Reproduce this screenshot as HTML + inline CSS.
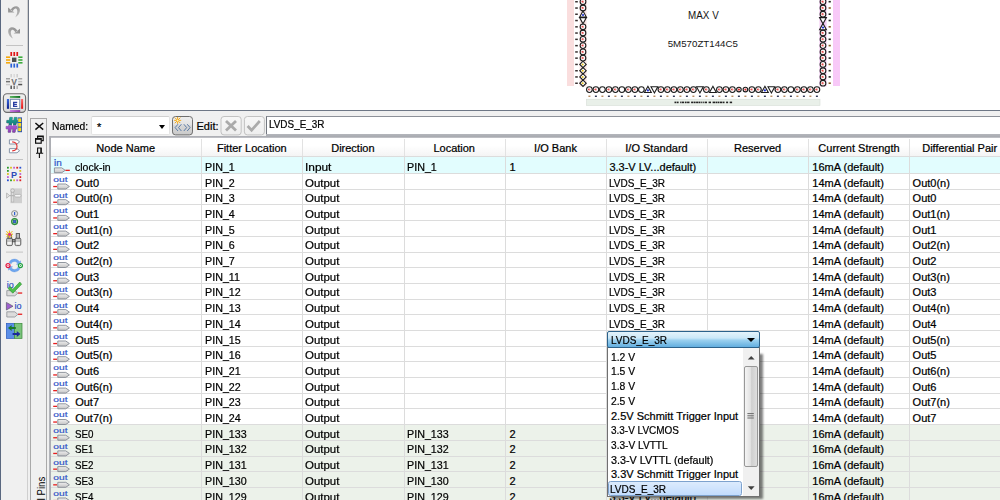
<!DOCTYPE html>
<html><head><meta charset="utf-8"><title>Pin Planner</title>
<style>
html,body{margin:0;padding:0}
body{width:1000px;height:500px;overflow:hidden;position:relative;background:#f0f0f0;font-family:"Liberation Sans",sans-serif;font-size:11px;color:#000}
.abs{position:absolute}
.t{position:absolute;white-space:pre;line-height:13px;height:13px;-webkit-text-stroke:.22px #000}
.row{position:absolute;left:51px;width:949px}
.hl{position:absolute;left:51px;width:949px;height:1px;background:#dcdcdc}
.vl{position:absolute;width:1px;background:#dcdcdc;top:157px;height:343px}
.cap{display:inline-block;transform-origin:0 50%;transform:scaleX(.91)}
svg{position:absolute;overflow:visible}
</style></head><body>

<div class="abs" id="chiparea" style="left:29px;top:0;width:971px;height:110px;background:#fff"></div>
<div class="abs" style="left:0;top:0;width:1px;height:500px;background:#5a6880"></div>
<div class="abs" style="left:27px;top:0;width:1px;height:500px;background:#cfcfcf"></div>
<div class="abs" style="left:28px;top:0;width:1px;height:111px;background:#6e7786"></div>
<div class="abs" style="left:28px;top:110px;width:972px;height:1px;background:#6e7786"></div>
<svg id="chip" style="left:0;top:0" width="1000" height="112" viewBox="0 0 1000 112">
<rect x="567" y="0" width="7" height="86" fill="#fadede"/>
<rect x="833" y="0" width="7" height="86" fill="#f8c9f8"/>
<rect x="579.6" y="0" width="7" height="86.5" fill="#f8e2e2"/>
<rect x="819.4" y="0" width="7.2" height="86.5" fill="#f3cdf3"/>
<path d="M579.8 83.2L583.0 80.0L586.2 83.2L583.0 86.4Z" fill="#fff" stroke="#1c1c1c" stroke-width="1.1"/><circle cx="582.7" cy="83.2" r="1.0" fill="#e8c020"/>
<rect x="575.2" y="82.5" width="2.6" height="1.5" fill="#3a3030"/>
<path d="M579.8 76.9L583.0 73.7L586.2 76.9L583.0 80.1Z" fill="#fff" stroke="#1c1c1c" stroke-width="1.1"/><circle cx="582.7" cy="76.9" r="1.0" fill="#e8c020"/>
<rect x="575.2" y="76.2" width="2.6" height="1.5" fill="#3a3030"/>
<path d="M579.8 70.7L583.0 67.5L586.2 70.7L583.0 73.9Z" fill="#fff" stroke="#1c1c1c" stroke-width="1.1"/><circle cx="582.7" cy="70.7" r="1.0" fill="#e8c020"/>
<rect x="575.2" y="70.0" width="2.6" height="1.5" fill="#3a3030"/>
<path d="M579.8 64.4L583.0 61.2L586.2 64.4L583.0 67.6Z" fill="#fff" stroke="#1c1c1c" stroke-width="1.1"/><circle cx="582.7" cy="64.4" r="1.0" fill="#e8c020"/>
<rect x="575.2" y="63.7" width="2.6" height="1.5" fill="#3a3030"/>
<circle cx="583.0" cy="58.1" r="2.85" fill="#fff" stroke="#1c1c1c" stroke-width="1.1"/><circle cx="582.8" cy="58.1" r="1.25" fill="#f29a9a"/><circle cx="582.3" cy="57.9" r="0.7" fill="#e04040"/>
<rect x="575.2" y="57.4" width="2.6" height="1.5" fill="#3a3030"/>
<circle cx="583.0" cy="51.9" r="2.85" fill="#fff" stroke="#1c1c1c" stroke-width="1.1"/><circle cx="582.8" cy="51.9" r="1.25" fill="#f29a9a"/><circle cx="582.3" cy="51.7" r="0.7" fill="#e04040"/>
<rect x="575.2" y="51.2" width="2.6" height="1.5" fill="#3a3030"/>
<circle cx="583.0" cy="45.6" r="2.85" fill="#fff" stroke="#1c1c1c" stroke-width="1.1"/><circle cx="582.8" cy="45.6" r="1.25" fill="#f29a9a"/><circle cx="582.3" cy="45.4" r="0.7" fill="#e04040"/>
<rect x="575.2" y="44.9" width="2.6" height="1.5" fill="#3a3030"/>
<circle cx="583.0" cy="39.3" r="2.85" fill="#fff" stroke="#1c1c1c" stroke-width="1.1"/><circle cx="582.8" cy="39.3" r="1.25" fill="#f29a9a"/><circle cx="582.3" cy="39.1" r="0.7" fill="#e04040"/>
<rect x="575.2" y="38.6" width="2.6" height="1.5" fill="#3a3030"/>
<circle cx="583.0" cy="33.0" r="2.85" fill="#fff" stroke="#1c1c1c" stroke-width="1.1"/><circle cx="582.8" cy="33.0" r="1.25" fill="#f29a9a"/><circle cx="582.3" cy="32.8" r="0.7" fill="#e04040"/>
<rect x="575.2" y="32.3" width="2.6" height="1.5" fill="#3a3030"/>
<circle cx="583.0" cy="26.8" r="2.85" fill="#fff" stroke="#1c1c1c" stroke-width="1.1"/><circle cx="582.8" cy="26.8" r="1.25" fill="#f29a9a"/><circle cx="582.3" cy="26.6" r="0.7" fill="#e04040"/>
<rect x="575.2" y="26.1" width="2.6" height="1.5" fill="#3a3030"/>
<path d="M583.0 23.8L586.4 17.6L579.6 17.6Z" fill="#fff" stroke="#1c1c1c" stroke-width="1.1"/>
<rect x="575.2" y="19.8" width="2.6" height="1.5" fill="#3a3030"/>
<path d="M583.0 10.9L586.4 17.1L579.6 17.1Z" fill="#fff" stroke="#1c1c1c" stroke-width="1.1"/><circle cx="583.0" cy="15.0" r="1.1" fill="#2030d0"/>
<rect x="575.2" y="13.5" width="2.6" height="1.5" fill="#3a3030"/>
<circle cx="583.0" cy="8.0" r="2.85" fill="#fff" stroke="#1c1c1c" stroke-width="1.1"/><circle cx="582.8" cy="8.0" r="1.25" fill="#f29a9a"/><circle cx="582.3" cy="7.8" r="0.7" fill="#e04040"/>
<rect x="575.2" y="7.3" width="2.6" height="1.5" fill="#3a3030"/>
<circle cx="583.0" cy="1.7" r="2.85" fill="#fff" stroke="#1c1c1c" stroke-width="1.1"/><circle cx="582.8" cy="1.7" r="1.25" fill="#f29a9a"/><circle cx="582.3" cy="1.5" r="0.7" fill="#e04040"/>
<rect x="575.2" y="1.0" width="2.6" height="1.5" fill="#3a3030"/>
<circle cx="823.0" cy="83.2" r="2.85" fill="#fff" stroke="#1c1c1c" stroke-width="1.1"/><circle cx="822.8" cy="83.2" r="1.25" fill="#f29a9a"/><circle cx="822.3" cy="83.0" r="0.7" fill="#e04040"/>
<rect x="828.6" y="82.4" width="2.2" height="1.6" fill="#8a5a2a"/>
<circle cx="823.0" cy="76.9" r="2.85" fill="#fff" stroke="#1c1c1c" stroke-width="1.1"/><circle cx="822.8" cy="76.9" r="1.25" fill="#f29a9a"/><circle cx="822.3" cy="76.7" r="0.7" fill="#e04040"/>
<rect x="828.6" y="76.1" width="2.2" height="1.6" fill="#222"/>
<circle cx="823.0" cy="70.7" r="2.85" fill="#fff" stroke="#1c1c1c" stroke-width="1.1"/><circle cx="822.8" cy="70.7" r="1.25" fill="#f29a9a"/><circle cx="822.3" cy="70.5" r="0.7" fill="#e04040"/>
<rect x="828.6" y="69.9" width="2.2" height="1.6" fill="#222"/>
<circle cx="823.0" cy="64.4" r="2.85" fill="#fff" stroke="#1c1c1c" stroke-width="1.1"/><circle cx="822.8" cy="64.4" r="1.25" fill="#f29a9a"/><circle cx="822.3" cy="64.2" r="0.7" fill="#e04040"/>
<rect x="828.6" y="63.6" width="2.2" height="1.6" fill="#8a5a2a"/>
<circle cx="823.0" cy="58.1" r="2.85" fill="#fff" stroke="#1c1c1c" stroke-width="1.1"/><circle cx="822.8" cy="58.1" r="1.25" fill="#f29a9a"/><circle cx="822.3" cy="57.9" r="0.7" fill="#e04040"/>
<rect x="828.6" y="57.3" width="2.2" height="1.6" fill="#222"/>
<circle cx="823.0" cy="51.9" r="2.85" fill="#fff" stroke="#1c1c1c" stroke-width="1.1"/><circle cx="822.8" cy="51.9" r="1.25" fill="#f29a9a"/><circle cx="822.3" cy="51.7" r="0.7" fill="#e04040"/>
<rect x="828.6" y="51.1" width="2.2" height="1.6" fill="#222"/>
<circle cx="823.0" cy="45.6" r="2.85" fill="#fff" stroke="#1c1c1c" stroke-width="1.1"/><circle cx="822.8" cy="45.6" r="1.25" fill="#f29a9a"/><circle cx="822.3" cy="45.4" r="0.7" fill="#e04040"/>
<rect x="828.6" y="44.8" width="2.2" height="1.6" fill="#8a5a2a"/>
<circle cx="823.0" cy="39.3" r="2.85" fill="#fff" stroke="#1c1c1c" stroke-width="1.1"/><circle cx="822.8" cy="39.3" r="1.25" fill="#f29a9a"/><circle cx="822.3" cy="39.1" r="0.7" fill="#e04040"/>
<rect x="828.6" y="38.5" width="2.2" height="1.6" fill="#222"/>
<circle cx="823.0" cy="33.0" r="2.85" fill="#fff" stroke="#1c1c1c" stroke-width="1.1"/><circle cx="822.8" cy="33.0" r="1.25" fill="#f29a9a"/><circle cx="822.3" cy="32.8" r="0.7" fill="#e04040"/>
<rect x="828.6" y="32.2" width="2.2" height="1.6" fill="#222"/>
<path d="M823.0 23.5L826.4 29.7L819.6 29.7Z" fill="#fff" stroke="#1c1c1c" stroke-width="1.1"/><circle cx="823.0" cy="27.6" r="1.1" fill="#2030d0"/>
<rect x="828.6" y="26.0" width="2.2" height="1.6" fill="#8a5a2a"/>
<path d="M823.0 23.8L826.4 17.6L819.6 17.6Z" fill="#fff" stroke="#1c1c1c" stroke-width="1.1"/>
<rect x="828.6" y="19.7" width="2.2" height="1.6" fill="#222"/>
<circle cx="823.0" cy="14.2" r="2.85" fill="#fff" stroke="#1c1c1c" stroke-width="1.1"/><circle cx="822.8" cy="14.2" r="1.25" fill="#f29a9a"/><circle cx="822.3" cy="14.0" r="0.7" fill="#e04040"/>
<rect x="828.6" y="13.4" width="2.2" height="1.6" fill="#222"/>
<circle cx="823.0" cy="8.0" r="2.85" fill="#fff" stroke="#1c1c1c" stroke-width="1.1"/><circle cx="822.8" cy="8.0" r="1.25" fill="#f29a9a"/><circle cx="822.3" cy="7.8" r="0.7" fill="#e04040"/>
<rect x="828.6" y="7.2" width="2.2" height="1.6" fill="#8a5a2a"/>
<circle cx="823.0" cy="1.7" r="2.85" fill="#fff" stroke="#1c1c1c" stroke-width="1.1"/><circle cx="822.8" cy="1.7" r="1.25" fill="#f29a9a"/><circle cx="822.3" cy="1.5" r="0.7" fill="#e04040"/>
<rect x="828.6" y="0.9" width="2.2" height="1.6" fill="#222"/>
<circle cx="589.4" cy="89.6" r="2.85" fill="#fff" stroke="#1c1c1c" stroke-width="1.1"/><circle cx="589.2" cy="89.6" r="1.25" fill="#f29a9a"/><circle cx="588.7" cy="89.4" r="0.7" fill="#e04040"/>
<rect x="588.4" y="95.6" width="2.0" height="1.3" fill="#b08050"/>
<circle cx="595.9" cy="89.6" r="2.85" fill="#fff" stroke="#1c1c1c" stroke-width="1.1"/><circle cx="595.7" cy="89.6" r="1.25" fill="#f29a9a"/><circle cx="595.2" cy="89.4" r="0.7" fill="#e04040"/>
<rect x="594.9" y="95.6" width="2.0" height="1.3" fill="#1a2244"/>
<circle cx="602.4" cy="89.6" r="2.85" fill="#fff" stroke="#1c1c1c" stroke-width="1.1"/>
<rect x="601.4" y="95.6" width="2.0" height="1.3" fill="#b08050"/>
<circle cx="608.9" cy="89.6" r="2.85" fill="#fff" stroke="#1c1c1c" stroke-width="1.1"/><circle cx="608.7" cy="89.6" r="1.25" fill="#f29a9a"/><circle cx="608.2" cy="89.4" r="0.7" fill="#e04040"/>
<rect x="607.9" y="95.6" width="2.0" height="1.3" fill="#1a2244"/>
<circle cx="615.4" cy="89.6" r="2.85" fill="#fff" stroke="#1c1c1c" stroke-width="1.1"/><circle cx="615.2" cy="89.6" r="1.25" fill="#f29a9a"/><circle cx="614.7" cy="89.4" r="0.7" fill="#e04040"/>
<rect x="614.4" y="95.6" width="2.0" height="1.3" fill="#b08050"/>
<circle cx="621.9" cy="89.6" r="2.85" fill="#fff" stroke="#1c1c1c" stroke-width="1.1"/>
<rect x="620.9" y="95.6" width="2.0" height="1.3" fill="#1a2244"/>
<circle cx="628.4" cy="89.6" r="2.85" fill="#fff" stroke="#1c1c1c" stroke-width="1.1"/><circle cx="628.2" cy="89.6" r="1.25" fill="#f29a9a"/><circle cx="627.7" cy="89.4" r="0.7" fill="#e04040"/>
<rect x="627.4" y="95.6" width="2.0" height="1.3" fill="#b08050"/>
<circle cx="634.9" cy="89.6" r="2.85" fill="#fff" stroke="#1c1c1c" stroke-width="1.1"/><circle cx="634.7" cy="89.6" r="1.25" fill="#f29a9a"/><circle cx="634.2" cy="89.4" r="0.7" fill="#e04040"/>
<rect x="633.9" y="95.6" width="2.0" height="1.3" fill="#1a2244"/>
<circle cx="641.4" cy="89.6" r="2.85" fill="#fff" stroke="#1c1c1c" stroke-width="1.1"/>
<rect x="640.4" y="95.6" width="2.0" height="1.3" fill="#b08050"/>
<path d="M647.9 86.3L651.3 92.5L644.5 92.5Z" fill="#fff" stroke="#1c1c1c" stroke-width="1.1"/><circle cx="647.9" cy="90.4" r="1.1" fill="#2030d0"/>
<rect x="646.9" y="95.6" width="2.0" height="1.3" fill="#1a2244"/>
<path d="M654.4 92.9L657.8 86.7L651.0 86.7Z" fill="#fff" stroke="#1c1c1c" stroke-width="1.1"/>
<rect x="653.4" y="95.6" width="2.0" height="1.3" fill="#b08050"/>
<circle cx="660.9" cy="89.6" r="2.85" fill="#fff" stroke="#1c1c1c" stroke-width="1.1"/><circle cx="660.7" cy="89.6" r="1.25" fill="#f29a9a"/><circle cx="660.2" cy="89.4" r="0.7" fill="#e04040"/>
<rect x="659.9" y="95.6" width="2.0" height="1.3" fill="#1a2244"/>
<circle cx="667.4" cy="89.6" r="2.85" fill="#fff" stroke="#1c1c1c" stroke-width="1.1"/><circle cx="667.2" cy="89.6" r="1.25" fill="#f29a9a"/><circle cx="666.7" cy="89.4" r="0.7" fill="#e04040"/>
<rect x="666.4" y="95.6" width="2.0" height="1.3" fill="#b08050"/>
<circle cx="673.9" cy="89.6" r="2.85" fill="#fff" stroke="#1c1c1c" stroke-width="1.1"/><circle cx="673.7" cy="89.6" r="1.25" fill="#f29a9a"/><circle cx="673.2" cy="89.4" r="0.7" fill="#e04040"/>
<rect x="672.9" y="95.6" width="2.0" height="1.3" fill="#1a2244"/>
<circle cx="680.4" cy="89.6" r="2.85" fill="#fff" stroke="#1c1c1c" stroke-width="1.1"/><circle cx="680.2" cy="89.6" r="1.25" fill="#f29a9a"/><circle cx="679.7" cy="89.4" r="0.7" fill="#e04040"/>
<rect x="679.4" y="95.6" width="2.0" height="1.3" fill="#b08050"/>
<circle cx="686.9" cy="89.6" r="2.85" fill="#fff" stroke="#1c1c1c" stroke-width="1.1"/><circle cx="686.7" cy="89.6" r="1.25" fill="#f29a9a"/><circle cx="686.2" cy="89.4" r="0.7" fill="#e04040"/>
<rect x="685.9" y="95.6" width="2.0" height="1.3" fill="#1a2244"/>
<circle cx="693.4" cy="89.6" r="2.85" fill="#fff" stroke="#1c1c1c" stroke-width="1.1"/><circle cx="693.2" cy="89.6" r="1.25" fill="#f29a9a"/><circle cx="692.7" cy="89.4" r="0.7" fill="#e04040"/>
<rect x="692.4" y="95.6" width="2.0" height="1.3" fill="#b08050"/>
<path d="M699.9 92.9L703.3 86.7L696.5 86.7Z" fill="#fff" stroke="#1c1c1c" stroke-width="1.1"/>
<rect x="698.9" y="95.6" width="2.0" height="1.3" fill="#1a2244"/>
<circle cx="706.4" cy="89.6" r="2.85" fill="#fff" stroke="#1c1c1c" stroke-width="1.1"/><circle cx="706.2" cy="89.6" r="1.25" fill="#f29a9a"/><circle cx="705.7" cy="89.4" r="0.7" fill="#e04040"/>
<rect x="705.4" y="95.6" width="2.0" height="1.3" fill="#b08050"/>
<path d="M712.9 86.3L716.3 92.5L709.5 92.5Z" fill="#fff" stroke="#1c1c1c" stroke-width="1.1"/>
<rect x="711.9" y="95.6" width="2.0" height="1.3" fill="#1a2244"/>
<circle cx="719.4" cy="89.6" r="2.85" fill="#fff" stroke="#1c1c1c" stroke-width="1.1"/><circle cx="719.2" cy="89.6" r="1.25" fill="#f29a9a"/><circle cx="718.7" cy="89.4" r="0.7" fill="#e04040"/>
<rect x="718.4" y="95.6" width="2.0" height="1.3" fill="#b08050"/>
<circle cx="725.9" cy="89.6" r="2.85" fill="#fff" stroke="#1c1c1c" stroke-width="1.1"/><circle cx="725.7" cy="89.6" r="1.25" fill="#f29a9a"/><circle cx="725.2" cy="89.4" r="0.7" fill="#e04040"/>
<rect x="724.9" y="95.6" width="2.0" height="1.3" fill="#1a2244"/>
<circle cx="732.4" cy="89.6" r="2.85" fill="#fff" stroke="#1c1c1c" stroke-width="1.1"/><circle cx="732.2" cy="89.6" r="1.25" fill="#f29a9a"/><circle cx="731.7" cy="89.4" r="0.7" fill="#e04040"/>
<rect x="731.4" y="95.6" width="2.0" height="1.3" fill="#b08050"/>
<circle cx="738.9" cy="89.6" r="2.3" fill="#fff" stroke="#1c1c1c" stroke-width="1.1"/><circle cx="738.9" cy="89.6" r="1.1" fill="#e03030"/>
<rect x="737.9" y="95.6" width="2.0" height="1.3" fill="#1a2244"/>
<circle cx="745.4" cy="89.6" r="2.3" fill="#fff" stroke="#1c1c1c" stroke-width="1.1"/><circle cx="745.4" cy="89.6" r="1.1" fill="#e03030"/>
<rect x="744.4" y="95.6" width="2.0" height="1.3" fill="#b08050"/>
<circle cx="751.9" cy="89.6" r="2.85" fill="#fff" stroke="#1c1c1c" stroke-width="1.1"/><circle cx="751.7" cy="89.6" r="1.25" fill="#f29a9a"/><circle cx="751.2" cy="89.4" r="0.7" fill="#e04040"/>
<rect x="750.9" y="95.6" width="2.0" height="1.3" fill="#1a2244"/>
<circle cx="758.4" cy="89.6" r="2.85" fill="#fff" stroke="#1c1c1c" stroke-width="1.1"/><circle cx="758.2" cy="89.6" r="1.25" fill="#f29a9a"/><circle cx="757.7" cy="89.4" r="0.7" fill="#e04040"/>
<rect x="757.4" y="95.6" width="2.0" height="1.3" fill="#b08050"/>
<path d="M764.9 86.3L768.3 92.5L761.5 92.5Z" fill="#fff" stroke="#1c1c1c" stroke-width="1.1"/><circle cx="764.9" cy="90.4" r="1.1" fill="#2030d0"/>
<rect x="763.9" y="95.6" width="2.0" height="1.3" fill="#1a2244"/>
<path d="M771.4 92.9L774.8 86.7L768.0 86.7Z" fill="#fff" stroke="#1c1c1c" stroke-width="1.1"/>
<rect x="770.4" y="95.6" width="2.0" height="1.3" fill="#b08050"/>
<circle cx="777.9" cy="89.6" r="2.85" fill="#fff" stroke="#1c1c1c" stroke-width="1.1"/><circle cx="777.7" cy="89.6" r="1.25" fill="#f29a9a"/><circle cx="777.2" cy="89.4" r="0.7" fill="#e04040"/>
<rect x="776.9" y="95.6" width="2.0" height="1.3" fill="#1a2244"/>
<circle cx="784.4" cy="89.6" r="2.85" fill="#fff" stroke="#1c1c1c" stroke-width="1.1"/><circle cx="784.2" cy="89.6" r="1.25" fill="#f29a9a"/><circle cx="783.7" cy="89.4" r="0.7" fill="#e04040"/>
<rect x="783.4" y="95.6" width="2.0" height="1.3" fill="#b08050"/>
<circle cx="790.9" cy="89.6" r="2.85" fill="#fff" stroke="#1c1c1c" stroke-width="1.1"/>
<rect x="789.9" y="95.6" width="2.0" height="1.3" fill="#1a2244"/>
<circle cx="797.4" cy="89.6" r="2.85" fill="#fff" stroke="#1c1c1c" stroke-width="1.1"/><circle cx="797.2" cy="89.6" r="1.25" fill="#f29a9a"/><circle cx="796.7" cy="89.4" r="0.7" fill="#e04040"/>
<rect x="796.4" y="95.6" width="2.0" height="1.3" fill="#b08050"/>
<circle cx="803.9" cy="89.6" r="2.85" fill="#fff" stroke="#1c1c1c" stroke-width="1.1"/><circle cx="803.7" cy="89.6" r="1.25" fill="#f29a9a"/><circle cx="803.2" cy="89.4" r="0.7" fill="#e04040"/>
<rect x="802.9" y="95.6" width="2.0" height="1.3" fill="#1a2244"/>
<circle cx="810.4" cy="89.6" r="2.85" fill="#fff" stroke="#1c1c1c" stroke-width="1.1"/><circle cx="810.2" cy="89.6" r="1.25" fill="#f29a9a"/><circle cx="809.7" cy="89.4" r="0.7" fill="#e04040"/>
<rect x="809.4" y="95.6" width="2.0" height="1.3" fill="#b08050"/>
<circle cx="816.9" cy="89.6" r="2.85" fill="#fff" stroke="#1c1c1c" stroke-width="1.1"/><circle cx="816.7" cy="89.6" r="1.25" fill="#f29a9a"/><circle cx="816.2" cy="89.4" r="0.7" fill="#e04040"/>
<rect x="815.9" y="95.6" width="2.0" height="1.3" fill="#1a2244"/>
<rect x="586.5" y="99.2" width="233.5" height="6.2" fill="#e9f0e9" stroke="#d5ddd5" stroke-width="0.6"/>
<g fill="#222">
<rect x="674.5" y="101.6" width="1.6" height="1.6"/>
<rect x="676.6" y="101.6" width="2.0" height="1.6"/>
<rect x="680.2" y="101.6" width="1.2" height="1.6"/>
<rect x="681.8" y="101.6" width="2.4" height="1.6"/>
<rect x="685.0" y="101.6" width="1.6" height="1.6"/>
<rect x="687.1" y="101.6" width="2.4" height="1.6"/>
<rect x="691.1" y="101.6" width="2.4" height="1.6"/>
<rect x="694.0" y="101.6" width="1.6" height="1.6"/>
<rect x="696.1" y="101.6" width="2.4" height="1.6"/>
<rect x="698.9" y="101.6" width="1.2" height="1.6"/>
<rect x="700.6" y="101.6" width="1.2" height="1.6"/>
<rect x="702.6" y="101.6" width="1.2" height="1.6"/>
<rect x="704.6" y="101.6" width="2.4" height="1.6"/>
<rect x="708.6" y="101.6" width="2.4" height="1.6"/>
<rect x="712.6" y="101.6" width="2.4" height="1.6"/>
<rect x="715.5" y="101.6" width="2.0" height="1.6"/>
<rect x="717.9" y="101.6" width="1.2" height="1.6"/>
<rect x="719.6" y="101.6" width="2.4" height="1.6"/>
<rect x="722.5" y="101.6" width="2.0" height="1.6"/>
<rect x="726.1" y="101.6" width="2.0" height="1.6"/>
<rect x="729.7" y="101.6" width="2.4" height="1.6"/>
</g>
<text x="703.4" y="18.7" font-family="Liberation Sans" font-size="10" text-anchor="middle" fill="#151515" textLength="30.6" lengthAdjust="spacingAndGlyphs">MAX V</text>
<text x="702.8" y="47.1" font-family="Liberation Sans" font-size="9.8" text-anchor="middle" fill="#151515" textLength="70.2" lengthAdjust="spacingAndGlyphs">5M570ZT144C5</text>
</svg>
<svg id="tb" style="left:0;top:0" width="29" height="500" viewBox="0 0 29 500">
<defs>
<linearGradient id="gbtn" x1="0" y1="0" x2="0" y2="1"><stop offset="0" stop-color="#efefef"/><stop offset="1" stop-color="#d9d9d9"/></linearGradient>
<linearGradient id="ggr" x1="0" y1="0" x2="1" y2="0"><stop offset="0" stop-color="#5cb860"/><stop offset="1" stop-color="#0c6a1e"/></linearGradient>
<linearGradient id="gpu" x1="0" y1="0" x2="1" y2="0"><stop offset="0" stop-color="#c878e0"/><stop offset="1" stop-color="#8a34a8"/></linearGradient>
<linearGradient id="gbl" x1="0" y1="0" x2="0" y2="1"><stop offset="0" stop-color="#3a6ae0"/><stop offset="1" stop-color="#10208a"/></linearGradient>
<linearGradient id="grd" x1="0" y1="0" x2="0" y2="1"><stop offset="0" stop-color="#ff6a6a"/><stop offset="1" stop-color="#e01010"/></linearGradient>
<linearGradient id="gar" x1="0" y1="0" x2="0" y2="1"><stop offset="0" stop-color="#c4c4c4"/><stop offset="1" stop-color="#8c8c8c"/></linearGradient>
<linearGradient id="gar2" x1="0" y1="0" x2="1" y2="1"><stop offset="0" stop-color="#8a8a8a"/><stop offset=".6" stop-color="#a4a4a4"/><stop offset="1" stop-color="#c4c4c4"/></linearGradient>
</defs>
<path d="M8.1 7.6 L8.1 12.4 L14.4 12.4 Z M10.6 10.2 C12.4 5.4 19.4 4.4 19.9 9.8 C20.1 13.4 17.6 16 15.2 17.4 C16.8 14.6 17.7 12.2 17.2 10.2 C16.6 7.8 14.2 7.8 12.8 11.4 Z" fill="url(#gar2)"/>
<g transform="translate(28.1 21.1) scale(-1 1)"><path d="M8.1 7.6 L8.1 12.4 L14.4 12.4 Z M10.6 10.2 C12.4 5.4 19.4 4.4 19.9 9.8 C20.1 13.4 17.6 16 15.2 17.4 C16.8 14.6 17.7 12.2 17.2 10.2 C16.6 7.8 14.2 7.8 12.8 11.4 Z" fill="url(#gar2)"/></g>
<rect x="6" y="45" width="17" height="1" fill="#c3c3c3"/>
<rect x="10.4" y="52" width="1.7" height="4" fill="#e01818"/>
<rect x="10.4" y="63.6" width="1.7" height="4" fill="#2a62d8"/>
<rect x="13.4" y="52" width="1.7" height="4" fill="#e01818"/>
<rect x="13.4" y="63.6" width="1.7" height="4" fill="#2a62d8"/>
<rect x="16.4" y="52" width="1.7" height="4" fill="#e01818"/>
<rect x="16.4" y="63.6" width="1.7" height="4" fill="#2a62d8"/>
<rect x="6" y="56.4" width="4.2" height="1.6" fill="#f5a80c"/>
<rect x="18.3" y="56.4" width="4.2" height="1.6" fill="#3cab3c"/>
<rect x="6" y="59.2" width="4.2" height="1.6" fill="#f5a80c"/>
<rect x="18.3" y="59.2" width="4.2" height="1.6" fill="#3cab3c"/>
<rect x="6" y="62" width="4.2" height="1.6" fill="#f5a80c"/>
<rect x="18.3" y="62" width="4.2" height="1.6" fill="#3cab3c"/>
<rect x="12" y="57.6" width="4.4" height="4.4" fill="#4a5050"/>
<rect x="10.4" y="74" width="1.6" height="3.4" fill="#d2d2d2"/>
<rect x="10.4" y="85.6" width="1.6" height="3.4" fill="#5e5e5e"/>
<rect x="13.4" y="74" width="1.6" height="3.4" fill="#dcdcdc"/>
<rect x="13.4" y="85.6" width="1.6" height="3.4" fill="#747474"/>
<rect x="16.4" y="74" width="1.6" height="3.4" fill="#cfcfcf"/>
<rect x="16.4" y="85.6" width="1.6" height="3.4" fill="#b4b4b4"/>
<rect x="6" y="78" width="4" height="1.5" fill="#a2a2a2"/>
<rect x="18.2" y="78" width="4" height="1.5" fill="#a8a8a8"/>
<rect x="6" y="80.9" width="4" height="1.5" fill="#727272"/>
<rect x="18.2" y="80.9" width="4" height="1.5" fill="#c2c2c2"/>
<rect x="6" y="83.8" width="4" height="1.5" fill="#cacaca"/>
<rect x="18.2" y="83.8" width="4" height="1.5" fill="#525252"/>
<text x="14.1" y="84.9" font-family="Liberation Sans" font-size="8.6" font-weight="bold" text-anchor="middle" fill="#6e6e6e">V</text>
<rect x="3.4" y="93.8" width="22.2" height="18.6" rx="3.6" fill="url(#gbtn)" stroke="#6c6c6c" stroke-width="1.1"/>
<rect x="9.9" y="96" width="10.3" height="1.9" fill="url(#ggr)"/>
<rect x="9.9" y="110.1" width="10.3" height="1.9" fill="url(#gpu)"/>
<rect x="6.9" y="99" width="2.1" height="9.8" fill="url(#gbl)"/>
<rect x="21.1" y="99" width="2" height="9.8" fill="url(#grd)"/>
<rect x="10.3" y="99.3" width="9.5" height="9.2" fill="#fff" stroke="#7088a8" stroke-width="1"/>
<path d="M13 101.8h4.2v1.2h-2.8v0.8h2.5v1.1h-2.5v0.9h2.9v1.2h-4.3z" fill="#2a3fa2"/>
<defs><linearGradient id="ghash" x1="0" y1="0" x2="0" y2="1"><stop offset="0" stop-color="#22a898"/><stop offset=".5" stop-color="#157a78"/><stop offset=".5" stop-color="#b060d8"/><stop offset="1" stop-color="#8a3cb0"/></linearGradient></defs>
<path d="M9.8 117.4h2.5l-1.7 14.8h-2.5zM14.3 117.4h2.5l-1.7 14.8h-2.5zM6.8 120.4h10.6v2.5h-10.6zM6.2 126.4h10.6v2.5h-10.6z" fill="url(#ghash)" stroke="#2a3a50" stroke-width=".6" stroke-linejoin="round" paint-order="stroke"/>
<path d="M9.8 117.4h2.5l-1.7 14.8h-2.5zM14.3 117.4h2.5l-1.7 14.8h-2.5zM6.8 120.4h10.6v2.5h-10.6zM6.2 126.4h10.6v2.5h-10.6z" fill="url(#ghash)"/>
<rect x="17.6" y="117.4" width="4.4" height="14.8" fill="#2a52b4"/>
<rect x="18.2" y="118.4" width="3" height="3.6" fill="#f8da20"/>
<rect x="18.2" y="123" width="3" height="3.6" fill="#f8da20"/>
<rect x="18.2" y="127.6" width="3" height="3.6" fill="#f8da20"/>
<path d="M9.4 139.8h7.6l2.6 2.1l-2.6 2.1h-7.6z" fill="#fff" stroke="#7a8aa0" stroke-width=".9"/>
<path d="M9.4 148.6h7.6l2.6 2.1l-2.6 2.1h-7.6z" fill="#fff" stroke="#7a8aa0" stroke-width=".9"/>
<path d="M12.2 141.9c6.4.4 6.4 8.6 0 9" fill="none" stroke="#e03030" stroke-width="1.1"/>
<rect x="6" y="159" width="17" height="1" fill="#c3c3c3"/>
<rect x="7.0" y="166.8" width="1.8" height="1.8" fill="#2a9a2a"/>
<rect x="7.0" y="179.4" width="1.8" height="1.8" fill="#2a52d0"/>
<rect x="10.1" y="166.8" width="1.8" height="1.8" fill="#d8c020"/>
<rect x="10.1" y="179.4" width="1.8" height="1.8" fill="#2a9a2a"/>
<rect x="13.2" y="166.8" width="1.8" height="1.8" fill="#c060d0"/>
<rect x="13.2" y="179.4" width="1.8" height="1.8" fill="#d8c020"/>
<rect x="16.3" y="166.8" width="1.8" height="1.8" fill="#e02020"/>
<rect x="16.3" y="179.4" width="1.8" height="1.8" fill="#c060d0"/>
<rect x="19.4" y="166.8" width="1.8" height="1.8" fill="#2a52d0"/>
<rect x="19.4" y="179.4" width="1.8" height="1.8" fill="#e02020"/>
<rect x="7" y="170.0" width="1.8" height="1.8" fill="#2a9a2a"/>
<rect x="19.4" y="170.0" width="1.8" height="1.8" fill="#d8c020"/>
<rect x="7" y="173.1" width="1.8" height="1.8" fill="#d8c020"/>
<rect x="19.4" y="173.1" width="1.8" height="1.8" fill="#c060d0"/>
<rect x="7" y="176.2" width="1.8" height="1.8" fill="#c060d0"/>
<rect x="19.4" y="176.2" width="1.8" height="1.8" fill="#e02020"/>
<text x="14.1" y="177.6" font-family="Liberation Sans" font-size="9" font-weight="bold" text-anchor="middle" fill="#2a4ab8">P</text>
<rect x="10.4" y="188.4" width="11.6" height="14.8" fill="#cfcfcf"/>
<circle cx="12.6" cy="190.6" r="1.8" fill="#e0e0e0" stroke="#a6a6a6" stroke-width=".7"/>
<rect x="11.4" y="192.4" width="2.4" height="9.6" fill="#dedede" stroke="#b0b0b0" stroke-width=".6"/>
<path d="M6.6 193l3 2.6l-3 2.6z" fill="#e4e4e4" stroke="#a8a8a8" stroke-width=".7"/>
<rect x="14.6" y="194.4" width="6.4" height="2.6" rx="1.2" fill="#f4f4f4" stroke="#ababab" stroke-width=".7"/>
<rect x="9.4" y="195" width="5" height="1.2" fill="#b4b4b4"/>
<circle cx="14.6" cy="213.6" r="3" fill="#e8e8e8" stroke="#8a8a8a" stroke-width="1"/><rect x="14" y="212" width="1.2" height="3.2" fill="#3060d0"/>
<circle cx="14.6" cy="221.6" r="3" fill="#9ad09a" stroke="#2a8a3a" stroke-width="1.1"/><rect x="13.3" y="220.3" width="2.6" height="2.6" fill="#3a6ad8" stroke="#1a3a98" stroke-width=".4"/>
<g stroke="#4a4a4a" stroke-width=".8"><rect x="6.6" y="238" width="5.8" height="7.6" rx="1.4" fill="#c4c4c4"/><rect x="15" y="238" width="5.8" height="7.6" rx="1.4" fill="#c4c4c4"/><rect x="8" y="234.6" width="3.4" height="3.6" fill="#bcbcbc"/><rect x="16.2" y="233.6" width="3.4" height="4.6" fill="#bcbcbc"/><rect x="12.4" y="239.4" width="2.6" height="2.4" fill="#9a9a9a"/></g>
<rect x="7.4" y="242" width="4.2" height="2.6" fill="#f4f4f4"/><rect x="15.8" y="242" width="4.2" height="2.6" fill="#f4f4f4"/>
<g stroke="#f0b000" stroke-width="1"><path d="M6.4 231.2l6 6M12.4 231.2l-6 6M9.4 230.6v7.2M5.8 234.2h7.2"/></g><circle cx="9.6" cy="234.4" r="1.4" fill="#e020a0"/>
<rect x="6" y="251.6" width="17" height="1" fill="#c3c3c3"/>
<path d="M9 262.4c2-4 8-4.6 10.4-.6l1.2-1l-.2 4.2l-4-.8l1.3-1c-2-2.6-5.4-2-6.6.6z" fill="#6ea6ee" stroke="#4a84d8" stroke-width=".3"/>
<path d="M20 268.6c-2 4-8 4.6-10.4.6l-1.2 1l.2-4.2l4 .8l-1.3 1c2 2.6 5.4 2 6.6-.6z" fill="#6ea6ee" stroke="#4a84d8" stroke-width=".3"/>
<circle cx="8" cy="265.6" r="2" fill="#fff" stroke="#e01840" stroke-width="1.2"/><circle cx="8" cy="265.6" r=".7" fill="#e01840"/>
<circle cx="20.4" cy="265.6" r="2" fill="#fff" stroke="#20a040" stroke-width="1.2"/><circle cx="20.4" cy="265.6" r=".7" fill="#20a040"/>
<text x="6.8" y="287.6" font-family="Liberation Sans" font-size="9" fill="#2f50c4" stroke="#2f50c4" stroke-width=".2">io</text>
<path d="M6.8 290.6h8l3 2.6l-3 2.6h-8z" fill="#dcdcdc" stroke="#8b8f96" stroke-width=".8"/><rect x="18" y="292.4" width="4.2" height="1.3" fill="#e62020"/>
<path d="M8 288.4l2.2-1.8l2.6 2.8l7-7.4l1.8 2.2l-8.8 9z" fill="#4cc04c" stroke="#2a8a2a" stroke-width=".6"/>
<path d="M6.4 302.4l6.6 3.8l-6.6 3.8z" fill="#a060d0" stroke="#5a5a6a" stroke-width=".7"/>
<text x="14.6" y="309.4" font-family="Liberation Sans" font-size="9" fill="#2f50c4" stroke="#2f50c4" stroke-width=".2">io</text>
<path d="M6.8 311.8h8l3 2.6l-3 2.6h-8z" fill="#dcdcdc" stroke="#8b8f96" stroke-width=".8"/><rect x="18" y="313.6" width="4.2" height="1.3" fill="#e62020"/>
<rect x="6.4" y="323.4" width="8" height="15" fill="#5a8ee8" stroke="#2a5ac0" stroke-width=".7"/><rect x="14.4" y="323.4" width="7.6" height="15" fill="#7cc47c" stroke="#3a8a3a" stroke-width=".7"/>
<path d="M8 328l3.6-3v2h4.2v2h-4.2v2z" fill="#1a7a2a"/>
<path d="M20.4 334l-3.6-3v2h-4.2v2h4.2v2z" fill="#1a2a9a"/>
</svg>
<div class="abs" style="left:30px;top:118px;width:17px;height:390px;border:1px solid #a9a9a9;box-sizing:border-box;background:#f0f0f0"></div>
<svg id="strip" style="left:30px;top:118px" width="18" height="382" viewBox="30 118 18 382">
<path d="M35.4 123l7.8 6.6M43.2 123l-7.8 6.6" stroke="#111" stroke-width="1.5" fill="none"/>
<g fill="none" stroke="#111" stroke-width="1.2"><path d="M37.6 138.4v-2.2h5.6v4.4h-1.8"/><rect x="35.6" y="138.6" width="5.6" height="4.6"/></g><rect x="35.6" y="138.4" width="5.6" height="1.4" fill="#111"/><rect x="37.6" y="136" width="5.6" height="1.2" fill="#111"/>
<g fill="none" stroke="#111" stroke-width="1.1"><path d="M37.6 153v-5h3.6v5M36 153.2h7.2M39.4 153.4v4.6"/></g><rect x="40.4" y="148" width="1.2" height="5" fill="#111"/>
<text transform="translate(44.9 495.4) rotate(-90)" font-family="Liberation Sans" font-size="11" fill="#000" textLength="18.6" lengthAdjust="spacingAndGlyphs">Pins</text>
<text transform="translate(44.9 510.4) rotate(-90)" font-family="Liberation Sans" font-size="11" fill="#000">All</text>
</svg>
<div class="t" style="left:52px;top:120px;"><span style="display:inline-block;transform-origin:0 50%;transform:scaleX(.935)">Named:</span></div>
<div class="abs" style="left:91px;top:116px;width:79px;height:19px;background:#fff;border:1px solid #e3e3e3;border-top-color:#d0d0d0;box-sizing:border-box;border-radius:2px"></div>
<div class="t" style="left:97px;top:121px;">*</div>
<div class="abs" style="left:159px;top:125px;width:0;height:0;border-left:3.5px solid transparent;border-right:3.5px solid transparent;border-top:4px solid #000"></div>
<svg id="fbtn" style="left:170px;top:114px" width="97" height="24" viewBox="170 114 97 24">
<defs><linearGradient id="fb1" x1="0" y1="0" x2="0" y2="1"><stop offset="0" stop-color="#efefef"/><stop offset=".45" stop-color="#e2e2e2"/><stop offset=".5" stop-color="#d6d6d6"/><stop offset="1" stop-color="#cacaca"/></linearGradient><linearGradient id="fb2" x1="0" y1="0" x2="0" y2="1"><stop offset="0" stop-color="#f7f7f7"/><stop offset="1" stop-color="#eeeeee"/></linearGradient></defs>
<rect x="172.5" y="116.5" width="20" height="18.4" rx="3" fill="url(#fb1)" stroke="#6f6f6f" stroke-width="1"/>
<g stroke="#f7a400" stroke-width=".9"><path d="M174.8 117.6l5.4 5.4M180.4 117.6l-5.6 5.6M177.6 117v6.8M174.2 120.4h7"/></g><circle cx="177.6" cy="120.4" r="1" fill="#fff3c0"/>
<g fill="none" stroke="#5c7ca6" stroke-width="1"><path d="M178 124.2l-2.9 3.4l2.9 3.4M181.4 124.2l-2.9 3.4l2.9 3.4M183.8 124.2l2.9 3.4l-2.9 3.4M187.2 124.2l2.9 3.4l-2.9 3.4"/></g>
<rect x="221" y="116.5" width="20.2" height="18.4" rx="3" fill="url(#fb2)" stroke="#c2c2c2" stroke-width="1"/>
<path d="M226 121l10 9.6M236 121l-10 9.6" stroke="#aaaaaa" stroke-width="2.8" fill="none"/>
<rect x="244.4" y="116.5" width="20" height="18.4" rx="3" fill="url(#fb2)" stroke="#c2c2c2" stroke-width="1"/>
<path d="M247.6 126l4 4.2l8.2-9.2" stroke="#ababab" stroke-width="2.7" fill="none"/>
</svg>
<div class="t" style="left:196.5px;top:120px;">Edit:</div>
<div class="abs" style="left:266px;top:116px;width:740px;height:19px;background:#fff;border-top:1px solid #8d9199;border-left:1px solid #72777f;box-sizing:border-box"></div>
<div class="t" style="left:268.7px;top:117.5px;"><span class="cap" style="transform:scaleX(.9)">LVDS_E_3R</span></div>
<div class="abs" style="left:50px;top:137px;width:950px;height:363px;background:#fff"></div>
<div class="abs" style="left:49px;top:136px;width:951px;height:2px;background:linear-gradient(#a6a8ae,#c6c7cb)"></div>
<div class="abs" style="left:266px;top:134px;width:734px;height:3px;background:linear-gradient(#b4b6bb,#a8aab0)"></div>
<div class="abs" style="left:49px;top:136px;width:2px;height:364px;background:linear-gradient(90deg,#b6b8bd,#a8aab0)"></div>
<div class="abs" style="left:51px;top:138px;width:949px;height:19px;background:linear-gradient(#fff 40%,#f3f3f3)"></div>
<div class="t" style="left:25.7px;width:200px;text-align:center;top:142px">Node Name</div>
<div class="t" style="left:151.8px;width:200px;text-align:center;top:142px">Fitter Location</div>
<div class="abs" style="left:201px;top:139px;width:1px;height:18px;background:#e2e2e2"></div>
<div class="t" style="left:252.9px;width:200px;text-align:center;top:142px">Direction</div>
<div class="abs" style="left:302px;top:139px;width:1px;height:18px;background:#e2e2e2"></div>
<div class="t" style="left:354.2px;width:200px;text-align:center;top:142px">Location</div>
<div class="abs" style="left:404px;top:139px;width:1px;height:18px;background:#e2e2e2"></div>
<div class="t" style="left:455.5px;width:200px;text-align:center;top:142px">I/O Bank</div>
<div class="abs" style="left:505px;top:139px;width:1px;height:18px;background:#e2e2e2"></div>
<div class="t" style="left:556.5px;width:200px;text-align:center;top:142px">I/O Standard</div>
<div class="abs" style="left:606px;top:139px;width:1px;height:18px;background:#e2e2e2"></div>
<div class="t" style="left:657.6px;width:200px;text-align:center;top:142px">Reserved</div>
<div class="abs" style="left:707px;top:139px;width:1px;height:18px;background:#e2e2e2"></div>
<div class="t" style="left:759.0px;width:200px;text-align:center;top:142px">Current Strength</div>
<div class="abs" style="left:808px;top:139px;width:1px;height:18px;background:#e2e2e2"></div>
<div class="t" style="left:859.7px;width:200px;text-align:center;top:142px">Differential Pair</div>
<div class="abs" style="left:909px;top:139px;width:1px;height:18px;background:#e2e2e2"></div>
<div class="row" style="top:156px;height:17px;background:#e2fdfe"></div>
<div class="row" style="top:173px;height:16px;background:#fff"></div>
<div class="row" style="top:189px;height:15px;background:#fff"></div>
<div class="row" style="top:204px;height:16px;background:#fff"></div>
<div class="row" style="top:220px;height:16px;background:#fff"></div>
<div class="row" style="top:236px;height:16px;background:#fff"></div>
<div class="row" style="top:252px;height:15px;background:#fff"></div>
<div class="row" style="top:267px;height:16px;background:#fff"></div>
<div class="row" style="top:283px;height:16px;background:#fff"></div>
<div class="row" style="top:299px;height:15px;background:#fff"></div>
<div class="row" style="top:314px;height:16px;background:#fff"></div>
<div class="row" style="top:330px;height:16px;background:#fff"></div>
<div class="row" style="top:346px;height:15px;background:#fff"></div>
<div class="row" style="top:361px;height:16px;background:#fff"></div>
<div class="row" style="top:377px;height:16px;background:#fff"></div>
<div class="row" style="top:393px;height:15px;background:#fff"></div>
<div class="row" style="top:408px;height:16px;background:#fff"></div>
<div class="row" style="top:424px;height:16px;background:#ecf2ea"></div>
<div class="row" style="top:440px;height:16px;background:#ecf2ea"></div>
<div class="row" style="top:456px;height:15px;background:#ecf2ea"></div>
<div class="row" style="top:471px;height:16px;background:#ecf2ea"></div>
<div class="row" style="top:487px;height:16px;background:#ecf2ea"></div>
<div class="hl" style="top:156px"></div>
<div class="hl" style="top:173px"></div>
<div class="hl" style="top:189px"></div>
<div class="hl" style="top:204px"></div>
<div class="hl" style="top:220px"></div>
<div class="hl" style="top:236px"></div>
<div class="hl" style="top:252px"></div>
<div class="hl" style="top:267px"></div>
<div class="hl" style="top:283px"></div>
<div class="hl" style="top:299px"></div>
<div class="hl" style="top:314px"></div>
<div class="hl" style="top:330px"></div>
<div class="hl" style="top:346px"></div>
<div class="hl" style="top:361px"></div>
<div class="hl" style="top:377px"></div>
<div class="hl" style="top:393px"></div>
<div class="hl" style="top:408px"></div>
<div class="hl" style="top:424px"></div>
<div class="hl" style="top:440px"></div>
<div class="hl" style="top:456px"></div>
<div class="hl" style="top:471px"></div>
<div class="hl" style="top:487px"></div>
<div class="hl" style="top:503px"></div>
<div class="vl" style="left:201px"></div>
<div class="vl" style="left:302px"></div>
<div class="vl" style="left:404px"></div>
<div class="vl" style="left:505px"></div>
<div class="vl" style="left:606px"></div>
<div class="vl" style="left:707px"></div>
<div class="vl" style="left:808px"></div>
<div class="vl" style="left:909px"></div>
<div class="t" style="left:75.2px;top:160.6px"><span class="cap" style="transform:scaleX(0.956)">clock-in</span></div>
<div class="t" style="left:204.6px;top:160.6px"><span class="cap" style="transform:scaleX(0.975)">PIN_1</span></div>
<div class="t" style="left:305.4px;top:160.6px"><span class="cap" style="transform:scaleX(1.08)">Input</span></div>
<div class="t" style="left:406.8px;top:160.6px"><span class="cap" style="transform:scaleX(0.975)">PIN_1</span></div>
<div class="t" style="left:509.6px;top:160.6px">1</div>
<div class="t" style="left:609.4px;top:160.6px">3.3-V LV...default)</div>
<div class="t" style="left:812.3px;top:160.6px">16mA (default)</div>
<div class="t" style="left:75.2px;top:176.5px">Out0</div>
<div class="t" style="left:204.6px;top:176.5px"><span class="cap" style="transform:scaleX(0.975)">PIN_2</span></div>
<div class="t" style="left:305.4px;top:176.5px"><span class="cap" style="transform:scaleX(1.04)">Output</span></div>
<div class="t" style="left:609.4px;top:176.5px"><span class="cap">LVDS_E_3R</span></div>
<div class="t" style="left:812.3px;top:176.5px">14mA (default)</div>
<div class="t" style="left:912.6px;top:176.5px">Out0(n)</div>
<div class="t" style="left:75.2px;top:192.2px">Out0(n)</div>
<div class="t" style="left:204.6px;top:192.2px"><span class="cap" style="transform:scaleX(0.975)">PIN_3</span></div>
<div class="t" style="left:305.4px;top:192.2px"><span class="cap" style="transform:scaleX(1.04)">Output</span></div>
<div class="t" style="left:609.4px;top:192.2px"><span class="cap">LVDS_E_3R</span></div>
<div class="t" style="left:812.3px;top:192.2px">14mA (default)</div>
<div class="t" style="left:912.6px;top:192.2px">Out0</div>
<div class="t" style="left:75.2px;top:207.9px">Out1</div>
<div class="t" style="left:204.6px;top:207.9px"><span class="cap" style="transform:scaleX(0.975)">PIN_4</span></div>
<div class="t" style="left:305.4px;top:207.9px"><span class="cap" style="transform:scaleX(1.04)">Output</span></div>
<div class="t" style="left:609.4px;top:207.9px"><span class="cap">LVDS_E_3R</span></div>
<div class="t" style="left:812.3px;top:207.9px">14mA (default)</div>
<div class="t" style="left:912.6px;top:207.9px">Out1(n)</div>
<div class="t" style="left:75.2px;top:223.6px">Out1(n)</div>
<div class="t" style="left:204.6px;top:223.6px"><span class="cap" style="transform:scaleX(0.975)">PIN_5</span></div>
<div class="t" style="left:305.4px;top:223.6px"><span class="cap" style="transform:scaleX(1.04)">Output</span></div>
<div class="t" style="left:609.4px;top:223.6px"><span class="cap">LVDS_E_3R</span></div>
<div class="t" style="left:812.3px;top:223.6px">14mA (default)</div>
<div class="t" style="left:912.6px;top:223.6px">Out1</div>
<div class="t" style="left:75.2px;top:239.3px">Out2</div>
<div class="t" style="left:204.6px;top:239.3px"><span class="cap" style="transform:scaleX(0.975)">PIN_6</span></div>
<div class="t" style="left:305.4px;top:239.3px"><span class="cap" style="transform:scaleX(1.04)">Output</span></div>
<div class="t" style="left:609.4px;top:239.3px"><span class="cap">LVDS_E_3R</span></div>
<div class="t" style="left:812.3px;top:239.3px">14mA (default)</div>
<div class="t" style="left:912.6px;top:239.3px">Out2(n)</div>
<div class="t" style="left:75.2px;top:255.0px">Out2(n)</div>
<div class="t" style="left:204.6px;top:255.0px"><span class="cap" style="transform:scaleX(0.975)">PIN_7</span></div>
<div class="t" style="left:305.4px;top:255.0px"><span class="cap" style="transform:scaleX(1.04)">Output</span></div>
<div class="t" style="left:609.4px;top:255.0px"><span class="cap">LVDS_E_3R</span></div>
<div class="t" style="left:812.3px;top:255.0px">14mA (default)</div>
<div class="t" style="left:912.6px;top:255.0px">Out2</div>
<div class="t" style="left:75.2px;top:270.7px">Out3</div>
<div class="t" style="left:204.6px;top:270.7px"><span class="cap" style="transform:scaleX(0.975)">PIN_11</span></div>
<div class="t" style="left:305.4px;top:270.7px"><span class="cap" style="transform:scaleX(1.04)">Output</span></div>
<div class="t" style="left:609.4px;top:270.7px"><span class="cap">LVDS_E_3R</span></div>
<div class="t" style="left:812.3px;top:270.7px">14mA (default)</div>
<div class="t" style="left:912.6px;top:270.7px">Out3(n)</div>
<div class="t" style="left:75.2px;top:286.4px">Out3(n)</div>
<div class="t" style="left:204.6px;top:286.4px"><span class="cap" style="transform:scaleX(0.975)">PIN_12</span></div>
<div class="t" style="left:305.4px;top:286.4px"><span class="cap" style="transform:scaleX(1.04)">Output</span></div>
<div class="t" style="left:609.4px;top:286.4px"><span class="cap">LVDS_E_3R</span></div>
<div class="t" style="left:812.3px;top:286.4px">14mA (default)</div>
<div class="t" style="left:912.6px;top:286.4px">Out3</div>
<div class="t" style="left:75.2px;top:302.1px">Out4</div>
<div class="t" style="left:204.6px;top:302.1px"><span class="cap" style="transform:scaleX(0.975)">PIN_13</span></div>
<div class="t" style="left:305.4px;top:302.1px"><span class="cap" style="transform:scaleX(1.04)">Output</span></div>
<div class="t" style="left:609.4px;top:302.1px"><span class="cap">LVDS_E_3R</span></div>
<div class="t" style="left:812.3px;top:302.1px">14mA (default)</div>
<div class="t" style="left:912.6px;top:302.1px">Out4(n)</div>
<div class="t" style="left:75.2px;top:317.8px">Out4(n)</div>
<div class="t" style="left:204.6px;top:317.8px"><span class="cap" style="transform:scaleX(0.975)">PIN_14</span></div>
<div class="t" style="left:305.4px;top:317.8px"><span class="cap" style="transform:scaleX(1.04)">Output</span></div>
<div class="t" style="left:609.4px;top:317.8px"><span class="cap">LVDS_E_3R</span></div>
<div class="t" style="left:812.3px;top:317.8px">14mA (default)</div>
<div class="t" style="left:912.6px;top:317.8px">Out4</div>
<div class="t" style="left:75.2px;top:333.5px">Out5</div>
<div class="t" style="left:204.6px;top:333.5px"><span class="cap" style="transform:scaleX(0.975)">PIN_15</span></div>
<div class="t" style="left:305.4px;top:333.5px"><span class="cap" style="transform:scaleX(1.04)">Output</span></div>
<div class="t" style="left:812.3px;top:333.5px">14mA (default)</div>
<div class="t" style="left:912.6px;top:333.5px">Out5(n)</div>
<div class="t" style="left:75.2px;top:349.2px">Out5(n)</div>
<div class="t" style="left:204.6px;top:349.2px"><span class="cap" style="transform:scaleX(0.975)">PIN_16</span></div>
<div class="t" style="left:305.4px;top:349.2px"><span class="cap" style="transform:scaleX(1.04)">Output</span></div>
<div class="t" style="left:609.4px;top:349.2px"><span class="cap">LVDS_E_3R</span></div>
<div class="t" style="left:812.3px;top:349.2px">14mA (default)</div>
<div class="t" style="left:912.6px;top:349.2px">Out5</div>
<div class="t" style="left:75.2px;top:364.9px">Out6</div>
<div class="t" style="left:204.6px;top:364.9px"><span class="cap" style="transform:scaleX(0.975)">PIN_21</span></div>
<div class="t" style="left:305.4px;top:364.9px"><span class="cap" style="transform:scaleX(1.04)">Output</span></div>
<div class="t" style="left:609.4px;top:364.9px"><span class="cap">LVDS_E_3R</span></div>
<div class="t" style="left:812.3px;top:364.9px">14mA (default)</div>
<div class="t" style="left:912.6px;top:364.9px">Out6(n)</div>
<div class="t" style="left:75.2px;top:380.6px">Out6(n)</div>
<div class="t" style="left:204.6px;top:380.6px"><span class="cap" style="transform:scaleX(0.975)">PIN_22</span></div>
<div class="t" style="left:305.4px;top:380.6px"><span class="cap" style="transform:scaleX(1.04)">Output</span></div>
<div class="t" style="left:609.4px;top:380.6px"><span class="cap">LVDS_E_3R</span></div>
<div class="t" style="left:812.3px;top:380.6px">14mA (default)</div>
<div class="t" style="left:912.6px;top:380.6px">Out6</div>
<div class="t" style="left:75.2px;top:396.3px">Out7</div>
<div class="t" style="left:204.6px;top:396.3px"><span class="cap" style="transform:scaleX(0.975)">PIN_23</span></div>
<div class="t" style="left:305.4px;top:396.3px"><span class="cap" style="transform:scaleX(1.04)">Output</span></div>
<div class="t" style="left:609.4px;top:396.3px"><span class="cap">LVDS_E_3R</span></div>
<div class="t" style="left:812.3px;top:396.3px">14mA (default)</div>
<div class="t" style="left:912.6px;top:396.3px">Out7(n)</div>
<div class="t" style="left:75.2px;top:412.0px">Out7(n)</div>
<div class="t" style="left:204.6px;top:412.0px"><span class="cap" style="transform:scaleX(0.975)">PIN_24</span></div>
<div class="t" style="left:305.4px;top:412.0px"><span class="cap" style="transform:scaleX(1.04)">Output</span></div>
<div class="t" style="left:609.4px;top:412.0px"><span class="cap">LVDS_E_3R</span></div>
<div class="t" style="left:812.3px;top:412.0px">14mA (default)</div>
<div class="t" style="left:912.6px;top:412.0px">Out7</div>
<div class="t" style="left:75.2px;top:427.7px"><span class="cap" style="transform:scaleX(0.89)">SE0</span></div>
<div class="t" style="left:204.6px;top:427.7px"><span class="cap" style="transform:scaleX(0.975)">PIN_133</span></div>
<div class="t" style="left:305.4px;top:427.7px"><span class="cap" style="transform:scaleX(1.04)">Output</span></div>
<div class="t" style="left:406.8px;top:427.7px"><span class="cap" style="transform:scaleX(0.975)">PIN_133</span></div>
<div class="t" style="left:509.6px;top:427.7px">2</div>
<div class="t" style="left:609.4px;top:427.7px">3.3-V LV...default)</div>
<div class="t" style="left:812.3px;top:427.7px">16mA (default)</div>
<div class="t" style="left:75.2px;top:443.4px"><span class="cap" style="transform:scaleX(0.89)">SE1</span></div>
<div class="t" style="left:204.6px;top:443.4px"><span class="cap" style="transform:scaleX(0.975)">PIN_132</span></div>
<div class="t" style="left:305.4px;top:443.4px"><span class="cap" style="transform:scaleX(1.04)">Output</span></div>
<div class="t" style="left:406.8px;top:443.4px"><span class="cap" style="transform:scaleX(0.975)">PIN_132</span></div>
<div class="t" style="left:509.6px;top:443.4px">2</div>
<div class="t" style="left:609.4px;top:443.4px">3.3-V LV...default)</div>
<div class="t" style="left:812.3px;top:443.4px">16mA (default)</div>
<div class="t" style="left:75.2px;top:459.1px"><span class="cap" style="transform:scaleX(0.89)">SE2</span></div>
<div class="t" style="left:204.6px;top:459.1px"><span class="cap" style="transform:scaleX(0.975)">PIN_131</span></div>
<div class="t" style="left:305.4px;top:459.1px"><span class="cap" style="transform:scaleX(1.04)">Output</span></div>
<div class="t" style="left:406.8px;top:459.1px"><span class="cap" style="transform:scaleX(0.975)">PIN_131</span></div>
<div class="t" style="left:509.6px;top:459.1px">2</div>
<div class="t" style="left:609.4px;top:459.1px">3.3-V LV...default)</div>
<div class="t" style="left:812.3px;top:459.1px">16mA (default)</div>
<div class="t" style="left:75.2px;top:474.8px"><span class="cap" style="transform:scaleX(0.89)">SE3</span></div>
<div class="t" style="left:204.6px;top:474.8px"><span class="cap" style="transform:scaleX(0.975)">PIN_130</span></div>
<div class="t" style="left:305.4px;top:474.8px"><span class="cap" style="transform:scaleX(1.04)">Output</span></div>
<div class="t" style="left:406.8px;top:474.8px"><span class="cap" style="transform:scaleX(0.975)">PIN_130</span></div>
<div class="t" style="left:509.6px;top:474.8px">2</div>
<div class="t" style="left:609.4px;top:474.8px">3.3-V LV...default)</div>
<div class="t" style="left:812.3px;top:474.8px">16mA (default)</div>
<div class="t" style="left:75.2px;top:490.5px"><span class="cap" style="transform:scaleX(0.89)">SE4</span></div>
<div class="t" style="left:204.6px;top:490.5px"><span class="cap" style="transform:scaleX(0.975)">PIN_129</span></div>
<div class="t" style="left:305.4px;top:490.5px"><span class="cap" style="transform:scaleX(1.04)">Output</span></div>
<div class="t" style="left:406.8px;top:490.5px"><span class="cap" style="transform:scaleX(0.975)">PIN_129</span></div>
<div class="t" style="left:509.6px;top:490.5px">2</div>
<div class="t" style="left:609.4px;top:490.5px">3.3-V LV...default)</div>
<div class="t" style="left:812.3px;top:490.5px">16mA (default)</div>
<svg style="left:50px;top:150px" width="30" height="350" viewBox="50 150 30 350"><defs><linearGradient id="pg" x1="0" y1="0" x2="0" y2="1"><stop offset="0" stop-color="#efefef"/><stop offset="1" stop-color="#c4c4c4"/></linearGradient></defs><text x="54.1" y="165.8" font-family="Liberation Sans" font-size="8" fill="#3556c8" stroke="#3556c8" stroke-width=".2" lengthAdjust="spacingAndGlyphs" textLength="7.8" style="font-size:8.4px">in</text><rect x="54.55" y="159.4" width="1.15" height="1.1" fill="#3556c8"/><path d="M54.4 167.9h7.4l3.4 2.4l-3.4 2.4h-7.4z" fill="url(#pg)" stroke="#858b94" stroke-width="0.9"/><rect x="65.4" y="169.7" width="4.4" height="1.3" fill="#e62020"/><text x="53.3" y="181.9" font-family="Liberation Sans" font-size="8" fill="#3556c8" stroke="#3556c8" stroke-width=".2" lengthAdjust="spacingAndGlyphs" textLength="14.2">out</text><rect x="53.2" y="185.9" width="3.8" height="1.3" fill="#e62020"/><path d="M57.8 184.0h8l3.6 2.5l-3.6 2.5h-8z" fill="url(#pg)" stroke="#858b94" stroke-width="0.9"/><text x="53.3" y="197.6" font-family="Liberation Sans" font-size="8" fill="#3556c8" stroke="#3556c8" stroke-width=".2" lengthAdjust="spacingAndGlyphs" textLength="14.2">out</text><rect x="53.2" y="201.6" width="3.8" height="1.3" fill="#e62020"/><path d="M57.8 199.7h8l3.6 2.5l-3.6 2.5h-8z" fill="url(#pg)" stroke="#858b94" stroke-width="0.9"/><text x="53.3" y="213.3" font-family="Liberation Sans" font-size="8" fill="#3556c8" stroke="#3556c8" stroke-width=".2" lengthAdjust="spacingAndGlyphs" textLength="14.2">out</text><rect x="53.2" y="217.3" width="3.8" height="1.3" fill="#e62020"/><path d="M57.8 215.4h8l3.6 2.5l-3.6 2.5h-8z" fill="url(#pg)" stroke="#858b94" stroke-width="0.9"/><text x="53.3" y="229.0" font-family="Liberation Sans" font-size="8" fill="#3556c8" stroke="#3556c8" stroke-width=".2" lengthAdjust="spacingAndGlyphs" textLength="14.2">out</text><rect x="53.2" y="233.0" width="3.8" height="1.3" fill="#e62020"/><path d="M57.8 231.1h8l3.6 2.5l-3.6 2.5h-8z" fill="url(#pg)" stroke="#858b94" stroke-width="0.9"/><text x="53.3" y="244.7" font-family="Liberation Sans" font-size="8" fill="#3556c8" stroke="#3556c8" stroke-width=".2" lengthAdjust="spacingAndGlyphs" textLength="14.2">out</text><rect x="53.2" y="248.7" width="3.8" height="1.3" fill="#e62020"/><path d="M57.8 246.8h8l3.6 2.5l-3.6 2.5h-8z" fill="url(#pg)" stroke="#858b94" stroke-width="0.9"/><text x="53.3" y="260.4" font-family="Liberation Sans" font-size="8" fill="#3556c8" stroke="#3556c8" stroke-width=".2" lengthAdjust="spacingAndGlyphs" textLength="14.2">out</text><rect x="53.2" y="264.4" width="3.8" height="1.3" fill="#e62020"/><path d="M57.8 262.5h8l3.6 2.5l-3.6 2.5h-8z" fill="url(#pg)" stroke="#858b94" stroke-width="0.9"/><text x="53.3" y="276.1" font-family="Liberation Sans" font-size="8" fill="#3556c8" stroke="#3556c8" stroke-width=".2" lengthAdjust="spacingAndGlyphs" textLength="14.2">out</text><rect x="53.2" y="280.1" width="3.8" height="1.3" fill="#e62020"/><path d="M57.8 278.2h8l3.6 2.5l-3.6 2.5h-8z" fill="url(#pg)" stroke="#858b94" stroke-width="0.9"/><text x="53.3" y="291.8" font-family="Liberation Sans" font-size="8" fill="#3556c8" stroke="#3556c8" stroke-width=".2" lengthAdjust="spacingAndGlyphs" textLength="14.2">out</text><rect x="53.2" y="295.8" width="3.8" height="1.3" fill="#e62020"/><path d="M57.8 293.9h8l3.6 2.5l-3.6 2.5h-8z" fill="url(#pg)" stroke="#858b94" stroke-width="0.9"/><text x="53.3" y="307.5" font-family="Liberation Sans" font-size="8" fill="#3556c8" stroke="#3556c8" stroke-width=".2" lengthAdjust="spacingAndGlyphs" textLength="14.2">out</text><rect x="53.2" y="311.5" width="3.8" height="1.3" fill="#e62020"/><path d="M57.8 309.6h8l3.6 2.5l-3.6 2.5h-8z" fill="url(#pg)" stroke="#858b94" stroke-width="0.9"/><text x="53.3" y="323.2" font-family="Liberation Sans" font-size="8" fill="#3556c8" stroke="#3556c8" stroke-width=".2" lengthAdjust="spacingAndGlyphs" textLength="14.2">out</text><rect x="53.2" y="327.2" width="3.8" height="1.3" fill="#e62020"/><path d="M57.8 325.3h8l3.6 2.5l-3.6 2.5h-8z" fill="url(#pg)" stroke="#858b94" stroke-width="0.9"/><text x="53.3" y="338.9" font-family="Liberation Sans" font-size="8" fill="#3556c8" stroke="#3556c8" stroke-width=".2" lengthAdjust="spacingAndGlyphs" textLength="14.2">out</text><rect x="53.2" y="342.9" width="3.8" height="1.3" fill="#e62020"/><path d="M57.8 341.0h8l3.6 2.5l-3.6 2.5h-8z" fill="url(#pg)" stroke="#858b94" stroke-width="0.9"/><text x="53.3" y="354.6" font-family="Liberation Sans" font-size="8" fill="#3556c8" stroke="#3556c8" stroke-width=".2" lengthAdjust="spacingAndGlyphs" textLength="14.2">out</text><rect x="53.2" y="358.6" width="3.8" height="1.3" fill="#e62020"/><path d="M57.8 356.7h8l3.6 2.5l-3.6 2.5h-8z" fill="url(#pg)" stroke="#858b94" stroke-width="0.9"/><text x="53.3" y="370.3" font-family="Liberation Sans" font-size="8" fill="#3556c8" stroke="#3556c8" stroke-width=".2" lengthAdjust="spacingAndGlyphs" textLength="14.2">out</text><rect x="53.2" y="374.3" width="3.8" height="1.3" fill="#e62020"/><path d="M57.8 372.4h8l3.6 2.5l-3.6 2.5h-8z" fill="url(#pg)" stroke="#858b94" stroke-width="0.9"/><text x="53.3" y="386.0" font-family="Liberation Sans" font-size="8" fill="#3556c8" stroke="#3556c8" stroke-width=".2" lengthAdjust="spacingAndGlyphs" textLength="14.2">out</text><rect x="53.2" y="390.0" width="3.8" height="1.3" fill="#e62020"/><path d="M57.8 388.1h8l3.6 2.5l-3.6 2.5h-8z" fill="url(#pg)" stroke="#858b94" stroke-width="0.9"/><text x="53.3" y="401.7" font-family="Liberation Sans" font-size="8" fill="#3556c8" stroke="#3556c8" stroke-width=".2" lengthAdjust="spacingAndGlyphs" textLength="14.2">out</text><rect x="53.2" y="405.7" width="3.8" height="1.3" fill="#e62020"/><path d="M57.8 403.8h8l3.6 2.5l-3.6 2.5h-8z" fill="url(#pg)" stroke="#858b94" stroke-width="0.9"/><text x="53.3" y="417.4" font-family="Liberation Sans" font-size="8" fill="#3556c8" stroke="#3556c8" stroke-width=".2" lengthAdjust="spacingAndGlyphs" textLength="14.2">out</text><rect x="53.2" y="421.4" width="3.8" height="1.3" fill="#e62020"/><path d="M57.8 419.5h8l3.6 2.5l-3.6 2.5h-8z" fill="url(#pg)" stroke="#858b94" stroke-width="0.9"/><text x="53.3" y="433.1" font-family="Liberation Sans" font-size="8" fill="#3556c8" stroke="#3556c8" stroke-width=".2" lengthAdjust="spacingAndGlyphs" textLength="14.2">out</text><rect x="53.2" y="437.1" width="3.8" height="1.3" fill="#e62020"/><path d="M57.8 435.2h8l3.6 2.5l-3.6 2.5h-8z" fill="url(#pg)" stroke="#858b94" stroke-width="0.9"/><text x="53.3" y="448.8" font-family="Liberation Sans" font-size="8" fill="#3556c8" stroke="#3556c8" stroke-width=".2" lengthAdjust="spacingAndGlyphs" textLength="14.2">out</text><rect x="53.2" y="452.8" width="3.8" height="1.3" fill="#e62020"/><path d="M57.8 450.9h8l3.6 2.5l-3.6 2.5h-8z" fill="url(#pg)" stroke="#858b94" stroke-width="0.9"/><text x="53.3" y="464.5" font-family="Liberation Sans" font-size="8" fill="#3556c8" stroke="#3556c8" stroke-width=".2" lengthAdjust="spacingAndGlyphs" textLength="14.2">out</text><rect x="53.2" y="468.5" width="3.8" height="1.3" fill="#e62020"/><path d="M57.8 466.6h8l3.6 2.5l-3.6 2.5h-8z" fill="url(#pg)" stroke="#858b94" stroke-width="0.9"/><text x="53.3" y="480.2" font-family="Liberation Sans" font-size="8" fill="#3556c8" stroke="#3556c8" stroke-width=".2" lengthAdjust="spacingAndGlyphs" textLength="14.2">out</text><rect x="53.2" y="484.2" width="3.8" height="1.3" fill="#e62020"/><path d="M57.8 482.3h8l3.6 2.5l-3.6 2.5h-8z" fill="url(#pg)" stroke="#858b94" stroke-width="0.9"/><text x="53.3" y="495.9" font-family="Liberation Sans" font-size="8" fill="#3556c8" stroke="#3556c8" stroke-width=".2" lengthAdjust="spacingAndGlyphs" textLength="14.2">out</text><rect x="53.2" y="499.9" width="3.8" height="1.3" fill="#e62020"/><path d="M57.8 498.0h8l3.6 2.5l-3.6 2.5h-8z" fill="url(#pg)" stroke="#858b94" stroke-width="0.9"/></svg>
<div class="abs" style="left:611px;top:354px;width:151.5px;height:145px;background:rgba(0,0,0,.5);filter:blur(.9px)"></div>
<div class="abs" style="left:607px;top:347px;width:153px;height:150px;background:#fff;border:1px solid #707070;box-sizing:border-box"></div>
<div class="t" style="left:611px;top:350.6px"><span class="cap" style="transform:scaleX(0.94)">1.2 V</span></div>
<div class="t" style="left:611px;top:365.3px"><span class="cap" style="transform:scaleX(0.94)">1.5 V</span></div>
<div class="t" style="left:611px;top:380.0px"><span class="cap" style="transform:scaleX(0.94)">1.8 V</span></div>
<div class="t" style="left:611px;top:394.8px"><span class="cap" style="transform:scaleX(0.94)">2.5 V</span></div>
<div class="t" style="left:611px;top:409.5px">2.5V Schmitt Trigger Input</div>
<div class="t" style="left:611px;top:424.2px"><span class="cap" style="transform:scaleX(0.907)">3.3-V LVCMOS</span></div>
<div class="t" style="left:611px;top:438.9px"><span class="cap" style="transform:scaleX(0.92)">3.3-V LVTTL</span></div>
<div class="t" style="left:611px;top:453.6px"><span class="cap" style="transform:scaleX(0.98)">3.3-V LVTTL (default)</span></div>
<div class="t" style="left:611px;top:468.4px">3.3V Schmitt Trigger Input</div>
<div class="abs" style="left:608px;top:481px;width:133.5px;height:14.5px;box-sizing:border-box;border:1px solid #7da2ce;border-radius:2.5px;background:linear-gradient(#dcebfd,#c2dcfd)"></div>
<div class="t" style="left:609.6px;top:482.9px"><span class="cap">LVDS_E_3R</span></div>
<div class="abs" style="left:743px;top:348px;width:16px;height:148px;background:#f0f0f0"></div>
<div class="abs" style="left:743.5px;top:366px;width:14px;height:100.5px;box-sizing:border-box;border:1px solid #979797;border-radius:2px;background:linear-gradient(90deg,#f4f4f4,#e2e2e2 45%,#cfcfcf 55%,#dedede)"></div>
<svg style="left:743px;top:348px" width="16" height="147" viewBox="743 348 16 147"><path d="M747.8 359.6l3.4-3.7l3.4 3.7z" fill="#404040"/><path d="M747.8 486.2l3.4 3.7l3.4-3.7z" fill="#404040"/><g stroke="#6a6a6a" stroke-width="1"><path d="M747.4 413.6h6.4M747.4 415.8h6.4M747.4 418h6.4"/></g></svg>
<div class="abs" style="left:607px;top:331px;width:153px;height:17px;box-sizing:border-box;border:1px solid #2c628b;border-radius:2px;background:linear-gradient(#e4f3fb 0%,#cbe8f8 40%,#9ad0ef 55%,#62aedf 100%)"></div>
<div class="t" style="left:610.6px;top:334px"><span class="cap">LVDS_E_3R</span></div>
<div class="abs" style="left:746.6px;top:338.2px;width:0;height:0;border-left:4px solid transparent;border-right:4px solid transparent;border-top:4.2px solid #000"></div>
</body></html>
